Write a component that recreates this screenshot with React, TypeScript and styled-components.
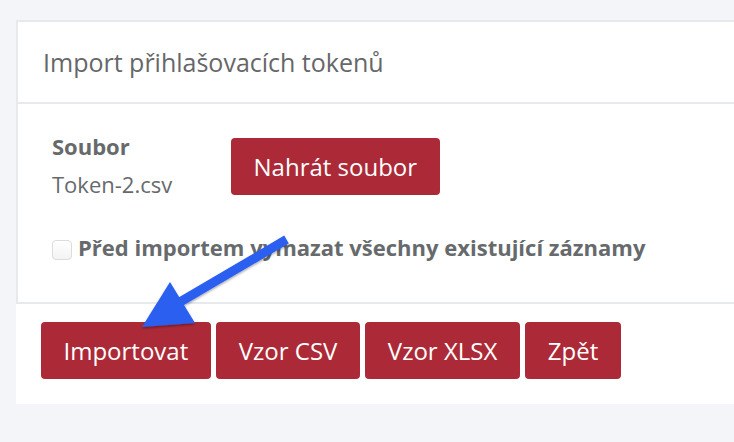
import styled, { createGlobalStyle } from "styled-components";

const GlobalStyle = createGlobalStyle`
  html, body {
    margin: 0;
    padding: 0;
    background: #f4f5f8;
    overflow: hidden;
  }
  body {
    font-family: "Open Sans", "DejaVu Sans", sans-serif;
    color: #676a6c;
  }
`;

const Page = styled.div`
  position: relative;
  width: 734px;
  height: 442px;
  padding: 20px 0 0 16px;
  box-sizing: border-box;
`;

const Card = styled.div`
  width: 740px;
`;

const CardTitle = styled.div`
  height: 80px;
  display: flex;
  align-items: center;
  padding-left: 25px;
  background: #fff;
  border-top: 2px solid #e7eaec;
  border-left: 2px solid #e7eaec;
  border-bottom: 2px solid #e7eaec;
  font-size: 25px;
  color: #666769;
`;

const CardBody = styled.div`
  background: #fff;
  border-left: 2px solid #e7eaec;
  border-bottom: 2px solid #e7eaec;
  padding: 27px 0 40px 34px;
`;

const FileRow = styled.div`
  display: flex;
  align-items: flex-start;
`;

const FileInfo = styled.div`
  width: 179px;
  display: flex;
  flex-direction: column;
  gap: 7.5px;
`;

const Label = styled.div`
  font-size: 22px;
  line-height: 30px;
  font-weight: 700;
`;

const FileName = styled.div`
  font-size: 22px;
  line-height: 30px;
`;

const Button = styled.button<{ $top?: number }>`
  height: 57px;
  margin-top: ${(p) => p.$top ?? 0}px;
  padding: 0 22.5px;
  border: none;
  border-radius: 4px;
  background: #ac2a37;
  color: #fff;
  font-family: "Open Sans", sans-serif;
  font-size: 24px;
  cursor: pointer;
`;

const CheckRow = styled.label`
  margin-top: 33px;
  display: flex;
  align-items: flex-start;
  gap: 6px;
  font-size: 22px;
  line-height: 30px;
  font-weight: 700;
`;

const Check = styled.input`
  appearance: none;
  margin: 8.5px 0 0;
  width: 20px;
  height: 20px;
  border: 1px solid #dcdcdc;
  border-radius: 4px;
  background: linear-gradient(#fff, #f3f3f3);
  flex: none;
`;

const Footer = styled.div`
  background: #fff;
  padding: 18px 0 25px 25px;
  display: flex;
  gap: 5.5px;
`;

const Arrow = styled.svg`
  position: absolute;
  left: 0;
  top: 0;
  pointer-events: none;
  overflow: visible;
`;

export default function App() {
  return (
    <Page>
      <GlobalStyle />
      <Card>
        <CardTitle>Import přihlašovacích tokenů</CardTitle>
        <CardBody>
          <FileRow>
            <FileInfo>
              <Label>Soubor</Label>
              <FileName>Token-2.csv</FileName>
            </FileInfo>
            <Button $top={7}>Nahrát soubor</Button>
          </FileRow>
          <CheckRow>
            <Check type="checkbox" />
            Před importem vymazat všechny existující záznamy
          </CheckRow>
        </CardBody>
        <Footer>
          <Button>Importovat</Button>
          <Button>Vzor CSV</Button>
          <Button>Vzor XLSX</Button>
          <Button>Zpět</Button>
        </Footer>
      </Card>
      <Arrow width="734" height="442" viewBox="0 0 734 442">
        <defs>
          <filter id="sh" x="-20%" y="-20%" width="140%" height="140%">
            <feDropShadow dx="0" dy="1.5" stdDeviation="1" floodColor="#000" floodOpacity="0.35" />
          </filter>
        </defs>
        <g filter="url(#sh)" fill="#2a5ff0">
          <line x1="286.5" y1="239.5" x2="180" y2="302" stroke="#2a5ff0" strokeWidth="9" />
          <polygon points="170,282 195,323 142,327" />
        </g>
      </Arrow>
    </Page>
  );
}
